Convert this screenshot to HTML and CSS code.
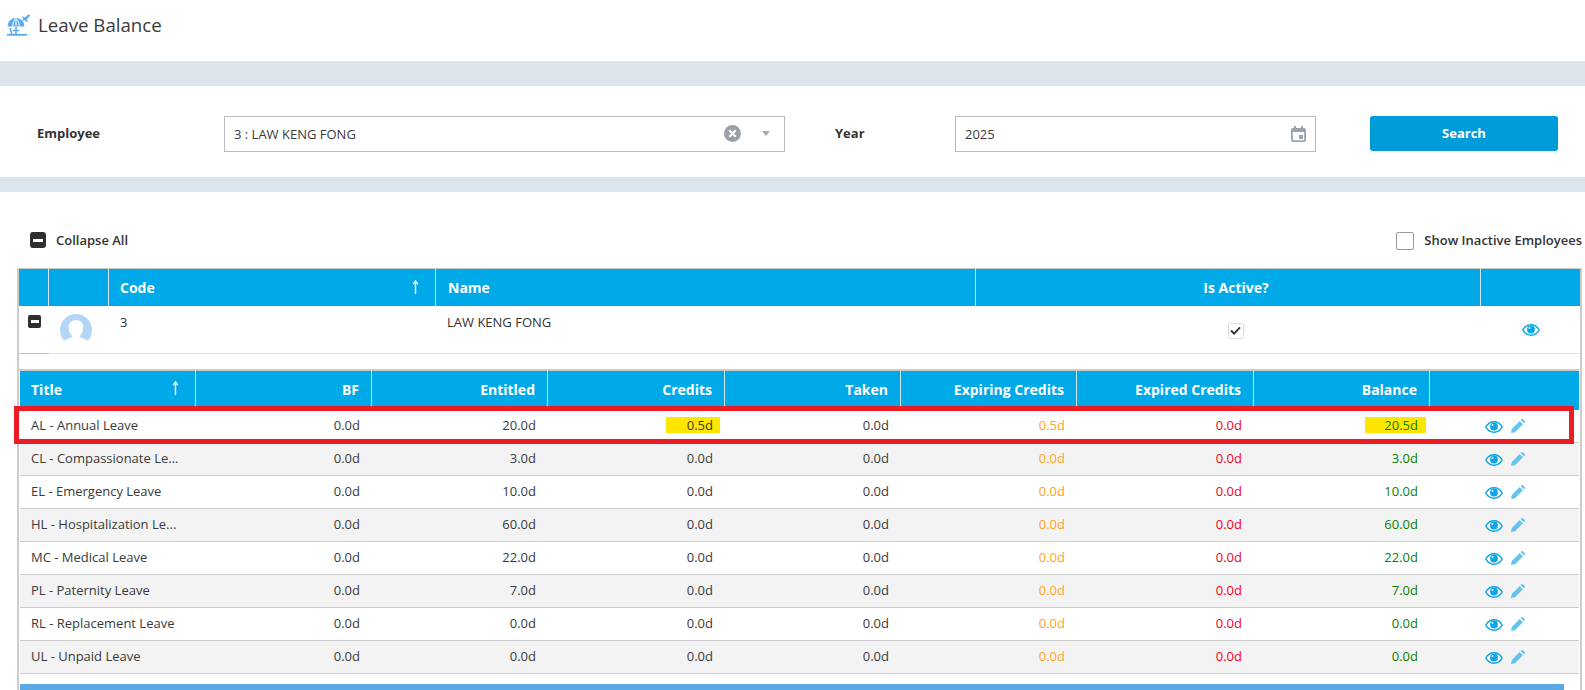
FILE: index.html
```html
<!DOCTYPE html>
<html lang="en">
<head>
<meta charset="utf-8">
<title>Leave Balance</title>
<link rel="stylesheet" href="styles.css">
</head>
<body>
<svg class="defs" width="0" height="0" aria-hidden="true">
  <symbol id="eye" viewBox="0 0 18 12">
    <path d="M.8 6C2.700 2.500 5.500.8 9 .8S15.300 2.500 17.200 6C15.300 9.500 12.500 11.200 9 11.200S2.700 9.500.8 6Z" fill="none" stroke="currentColor" stroke-width="1.500"/>
    <circle cx="9" cy="5.500" r="3.900" fill="currentColor"/>
    <circle cx="7.500" cy="4" r=".9" fill="#fff"/>
  </symbol>
  <symbol id="pen" viewBox="0 0 14 14">
    <path d="M0 14 .8 10 8.700 2.100 11.900 5.300 4 13.200Z M9.700 1.100 10.500.3C10.900-.1 11.500-.1 11.900.3L13.700 2.100C14.100 2.500 14.100 3.100 13.700 3.500L12.900 4.300Z" fill="currentColor"/>
  </symbol>
  <symbol id="sort-up" viewBox="0 0 7 14">
    <path d="M3.500 14V1.500M1.200 4.200 3.500 1 5.800 4.200" fill="none" stroke="currentColor" stroke-width="1.400"/>
  </symbol>
</svg>

<header class="page-head">
  <svg class="head-icon" viewBox="0 0 23 22" aria-hidden="true">
    <path d="M.5 12.500A8.500 8.500 0 0 1 17.500 12.500Z" fill="#5aa9ee"/>
    <path d="M5.700 12.500C5.700 9 7 6 9 4.500C11 6 12.300 9 12.300 12.500 M9 4.500V12.500" fill="none" stroke="#fff" stroke-width="1"/>
    <path d="M9 12.500V20 M6 16.500H12 M3 14 4.800 20" fill="none" stroke="#5aa9ee" stroke-width="1.500"/>
    <path d="M0 20.800H20" fill="none" stroke="#5aa9ee" stroke-width="1.800"/>
    <path d="M13.500 7 15.500 6 16.500 4.500 14.500 2.800 15.600 2.400 18 3.600 20.500 1.200C21.300.5 22.500.2 22.900.6 23.300 1 22.800 2.200 22 3L19.800 5.300 20.800 7.800 19.900 8.300 17.900 6.300Z" fill="#5aa9ee"/>
  </svg>
  <h1 class="page-title">Leave Balance</h1>
</header>

<div class="band band-top"></div>

<section class="filter">
  <label class="filter-label label-employee">Employee</label>
  <div class="field field-employee">
    <span class="field-value">3 : LAW KENG FONG</span>
    <svg class="clear-icon" viewBox="0 0 16 16" aria-hidden="true">
      <circle cx="8" cy="8" r="8" fill="#9aa0a8"/>
      <path d="M5 5 11 11M11 5 5 11" stroke="#fff" stroke-width="2"/>
    </svg>
    <span class="caret"></span>
  </div>
  <label class="filter-label label-year">Year</label>
  <div class="field field-year">
    <span class="field-value">2025</span>
    <svg class="cal-icon" viewBox="0 0 15 16" aria-hidden="true">
      <path d="M2 2H3V0H5V2H10V0H12V2H13A2 2 0 0 1 15 4V14A2 2 0 0 1 13 16H2A2 2 0 0 1 0 14V4A2 2 0 0 1 2 2ZM1.800 6V14.200H13.200V6Z M8 9H12V13H8Z" fill="#9aa3ad" fill-rule="evenodd"/>
    </svg>
  </div>
  <button class="search-btn" type="button">Search</button>
</section>

<div class="band band-mid"></div>

<section class="toolbar">
  <div class="collapse-all">
    <span class="minus-box minus-large"></span>
    <span>Collapse All</span>
  </div>
  <div class="show-inactive">
    <span class="check-empty"></span>
    <span>Show Inactive Employees</span>
  </div>
</section>

<section class="grid-shell">
  <table class="grid emp-grid">
    <colgroup>
      <col class="ec-1"><col class="ec-2"><col class="ec-3"><col class="ec-4"><col class="ec-5"><col>
    </colgroup>
    <thead>
      <tr>
        <th></th>
        <th></th>
        <th class="sort-th"><div class="sort-wrap">Code<svg class="sort-arrow"><use href="#sort-up"/></svg></div></th>
        <th>Name</th>
        <th class="center active-head">Is Active?</th>
        <th></th>
      </tr>
    </thead>
    <tbody>
      <tr>
        <td class="emp-cell"><span class="minus-box minus-small"></span></td>
        <td class="emp-cell">
          <svg class="avatar" viewBox="0 0 32 32" aria-hidden="true">
            <path d="M4 26.600A16 16 0 1 1 28 26.600L19.300 22.700C22 20 23.300 17 23.300 13 23.300 9 20 6 16 6S8.700 9 8.700 13C8.700 17 10 20 12.700 22.700Z" fill="#b3d5f6"/>
          </svg>
        </td>
        <td class="emp-cell emp-text">3</td>
        <td class="emp-cell emp-text">LAW KENG FONG</td>
        <td class="emp-cell center"><span class="check-on"><svg viewBox="0 0 12 10" aria-hidden="true"><path d="M1 5 4.500 8.500 11 1.500" fill="none" stroke="#333" stroke-width="2"/></svg></span></td>
        <td class="emp-cell center"><svg class="eye eye-emp"><use href="#eye"/></svg></td>
      </tr>
    </tbody>
  </table>

  <div class="detail">
    <table class="grid leave-grid">
      <colgroup>
        <col class="lc-n"><col class="lc-n"><col class="lc-n"><col class="lc-w"><col class="lc-n"><col class="lc-n"><col class="lc-w"><col class="lc-n"><col>
      </colgroup>
      <thead>
        <tr>
          <th class="sort-th"><div class="sort-wrap">Title<svg class="sort-arrow"><use href="#sort-up"/></svg></div></th>
          <th class="num">BF</th>
          <th class="num">Entitled</th>
          <th class="num">Credits</th>
          <th class="num">Taken</th>
          <th class="num">Expiring Credits</th>
          <th class="num">Expired Credits</th>
          <th class="num">Balance</th>
          <th></th>
        </tr>
      </thead>
      <tbody>
        <tr>
          <td>AL - Annual Leave</td><td class="num">0.0d</td><td class="num">20.0d</td>
          <td class="num"><span class="marker marker-credits">0.5d</span></td><td class="num">0.0d</td>
          <td class="num amber">0.5d</td><td class="num red">0.0d</td>
          <td class="num green"><span class="marker marker-balance">20.5d</span></td>
          <td class="actions"><svg class="eye"><use href="#eye"/></svg><svg class="pen"><use href="#pen"/></svg></td>
        </tr>
        <tr>
          <td>CL - Compassionate Le...</td><td class="num">0.0d</td><td class="num">3.0d</td>
          <td class="num">0.0d</td><td class="num">0.0d</td>
          <td class="num amber">0.0d</td><td class="num red">0.0d</td><td class="num green">3.0d</td>
          <td class="actions"><svg class="eye"><use href="#eye"/></svg><svg class="pen"><use href="#pen"/></svg></td>
        </tr>
        <tr>
          <td>EL - Emergency Leave</td><td class="num">0.0d</td><td class="num">10.0d</td>
          <td class="num">0.0d</td><td class="num">0.0d</td>
          <td class="num amber">0.0d</td><td class="num red">0.0d</td><td class="num green">10.0d</td>
          <td class="actions"><svg class="eye"><use href="#eye"/></svg><svg class="pen"><use href="#pen"/></svg></td>
        </tr>
        <tr>
          <td>HL - Hospitalization Le...</td><td class="num">0.0d</td><td class="num">60.0d</td>
          <td class="num">0.0d</td><td class="num">0.0d</td>
          <td class="num amber">0.0d</td><td class="num red">0.0d</td><td class="num green">60.0d</td>
          <td class="actions"><svg class="eye"><use href="#eye"/></svg><svg class="pen"><use href="#pen"/></svg></td>
        </tr>
        <tr>
          <td>MC - Medical Leave</td><td class="num">0.0d</td><td class="num">22.0d</td>
          <td class="num">0.0d</td><td class="num">0.0d</td>
          <td class="num amber">0.0d</td><td class="num red">0.0d</td><td class="num green">22.0d</td>
          <td class="actions"><svg class="eye"><use href="#eye"/></svg><svg class="pen"><use href="#pen"/></svg></td>
        </tr>
        <tr>
          <td>PL - Paternity Leave</td><td class="num">0.0d</td><td class="num">7.0d</td>
          <td class="num">0.0d</td><td class="num">0.0d</td>
          <td class="num amber">0.0d</td><td class="num red">0.0d</td><td class="num green">7.0d</td>
          <td class="actions"><svg class="eye"><use href="#eye"/></svg><svg class="pen"><use href="#pen"/></svg></td>
        </tr>
        <tr>
          <td>RL - Replacement Leave</td><td class="num">0.0d</td><td class="num">0.0d</td>
          <td class="num">0.0d</td><td class="num">0.0d</td>
          <td class="num amber">0.0d</td><td class="num red">0.0d</td><td class="num green">0.0d</td>
          <td class="actions"><svg class="eye"><use href="#eye"/></svg><svg class="pen"><use href="#pen"/></svg></td>
        </tr>
        <tr>
          <td>UL - Unpaid Leave</td><td class="num">0.0d</td><td class="num">0.0d</td>
          <td class="num">0.0d</td><td class="num">0.0d</td>
          <td class="num amber">0.0d</td><td class="num red">0.0d</td><td class="num green">0.0d</td>
          <td class="actions"><svg class="eye"><use href="#eye"/></svg><svg class="pen"><use href="#pen"/></svg></td>
        </tr>
      </tbody>
    </table>
    <div class="annotation"></div>
  </div>
  <div class="progress-bar"></div>
</section>
</body>
</html>
```
FILE: styles.css
```css
* { box-sizing: border-box; }
html, body { margin: 0; padding: 0; }
body {
  width: 1585px;
  height: 690px;
  overflow: hidden;
  background: #fff;
  color: #333;
  font-family: "Open Sans", "Liberation Sans", sans-serif;
  font-size: 13px;
}
.defs { position: absolute; }

.page-head { height: 61px; display: flex; align-items: center; padding: 0 0 12px 7px; }
.head-icon { width: 23px; height: 22px; }
.page-title { margin: 0 0 0 8px; font-size: 18.700px; font-weight: 400; color: #3c3c3c; }

.band { background: #dde5ec; }
.band-top { height: 25px; }
.band-mid { height: 15px; }

.filter { height: 91px; display: flex; align-items: center; padding: 2px 0 0 37px; }
.filter-label { font-weight: 700; color: #333; }
.label-employee { width: 187px; }
.label-year { width: 120px; margin-left: 50px; }
.field {
  height: 36px;
  margin-top: 2px;
  border: 1px solid #b9b9b9;
  display: flex;
  align-items: center;
  padding: 0 9px;
}
.field-value { flex: 1; color: #3a3a3a; }
.field-employee { width: 561px; }
.field-year { width: 361px; padding-right: 9px; }
.clear-icon { width: 17px; height: 17px; margin-right: 21px; }
.caret { width: 0; height: 0; border: 4px solid transparent; border-top: 5px solid #a9a9a9; border-bottom: 0; margin-right: 5px; }
.cal-icon { width: 15px; height: 16px; }
.search-btn {
  width: 188px;
  height: 35px;
  margin: 2px 0 0 54px;
  padding-bottom: 2px;
  border: 0;
  border-radius: 3px;
  background: #009bd9;
  color: #fff;
  font: 700 13px "Open Sans", "Liberation Sans", sans-serif;
}

.toolbar { height: 76px; display: flex; justify-content: space-between; align-items: center; padding: 20px 3px 0 30px; }
.collapse-all, .show-inactive { display: flex; align-items: center; font-weight: 600; color: #333; }
.collapse-all { gap: 10px; }
.show-inactive { gap: 10px; }
.minus-box { display: inline-flex; align-items: center; justify-content: center; background: #2f2f2f; vertical-align: top; }
.minus-box::before { content: ""; display: block; background: #fff; }
.minus-large { width: 16px; height: 16px; border-radius: 3px; }
.minus-large::before { width: 10px; height: 3px; }
.minus-small { width: 13px; height: 13px; border-radius: 2px; }
.minus-small::before { width: 8px; height: 3px; }
.check-empty { width: 18px; height: 18px; margin-top: 2px; border: 1px solid #999; border-radius: 2px; background: #fff; }

.grid-shell {
  margin: 0 3px 0 17px;
  height: 422px;
  border: solid #ccc;
  border-width: 1px 2px 0 2px;
}
.grid { width: 100%; border-collapse: separate; border-spacing: 0; table-layout: fixed; }
.grid th {
  height: 37px;
  padding: 0 12px;
  background: #00a9e7;
  color: #fff;
  font-weight: 700;
  font-size: 14px;
  text-align: left;
  border-right: 1px solid #d7e6ef;
}
.grid th:last-child { border-right: 0; }
.grid .center { text-align: center; }
.grid .num { text-align: right; }
.grid .sort-th { padding-left: 11px; padding-right: 0; }
.grid .active-head { padding-left: 28px; }
.sort-wrap { display: flex; justify-content: space-between; align-items: center; padding-right: 16px; }
.sort-arrow { width: 7px; height: 14px; margin-bottom: 2px; color: #fff; }

.ec-1 { width: 30px; }
.ec-2 { width: 60px; }
.ec-3 { width: 327px; }
.ec-4 { width: 540px; }
.ec-5 { width: 505px; }
.emp-cell { height: 48px; vertical-align: top; border-bottom: 1px solid #e4e4e4; }
.emp-grid td:first-child { padding: 9px 0 0 9px; border-bottom-color: #c4c4c4; }
.emp-grid td:nth-child(2) { padding: 8px 0 0 11px; }
.emp-grid .emp-text { padding: 7px 11px 0; }
.avatar { display: block; width: 32px; height: 32px; }
.emp-grid td:nth-child(5) { padding-top: 15px; }
.emp-grid td:nth-child(6) { padding: 18px 0 0; }
.emp-grid td:nth-child(6) .eye { display: block; margin: 0 auto; }
.check-on {
  display: inline-flex;
  align-items: center;
  justify-content: center;
  width: 16px;
  height: 16px;
  margin-left: 14px;
  border: 1px solid #ddd;
  border-radius: 2px;
}
.check-on svg { width: 11px; height: 9px; }

.detail { position: relative; margin: 15px 1px 0 0; border-top: 2px solid #ccc; padding-left: 1px; }
.lc-n { width: 176px; }
.lc-w { width: 177px; }
.leave-grid th { height: 39px; padding-bottom: 3px; }
.leave-grid td {
  height: 33px;
  padding: 0 12px 2px;
  border-bottom: 1px solid #ccc;
  color: #3a3a3a;
  white-space: nowrap;
}
.leave-grid td:first-child { padding-left: 11px; }
.leave-grid tbody tr:nth-child(even) td { background: #f3f3f3; }
.leave-grid .amber { color: #ffa31a; }
.leave-grid .red { color: #f4001f; }
.leave-grid .green { color: #0a8000; }
.leave-grid .actions { padding-left: 55px; }
.eye { width: 18px; height: 12px; color: #0ca6e6; display: inline-block; vertical-align: middle; }
.pen { width: 14px; height: 14px; margin: 0 0 1px 8px; color: #63c3ef; display: inline-block; vertical-align: middle; }
.marker {
  display: inline-block;
  background: #ffe600;
  line-height: 16px;
}
.marker-credits { width: 54px; padding-right: 7px; margin-right: -7px; }
.marker-balance { width: 61px; padding-right: 8px; margin-right: -8px; }

.annotation {
  position: absolute;
  left: -5px;
  top: 35px;
  width: 1560px;
  height: 38px;
  border: 5px solid #ed1c24;
}
.progress-bar { height: 6px; width: 1544px; margin: 10px 0 0 1px; background: #5aa9e6; }
```
